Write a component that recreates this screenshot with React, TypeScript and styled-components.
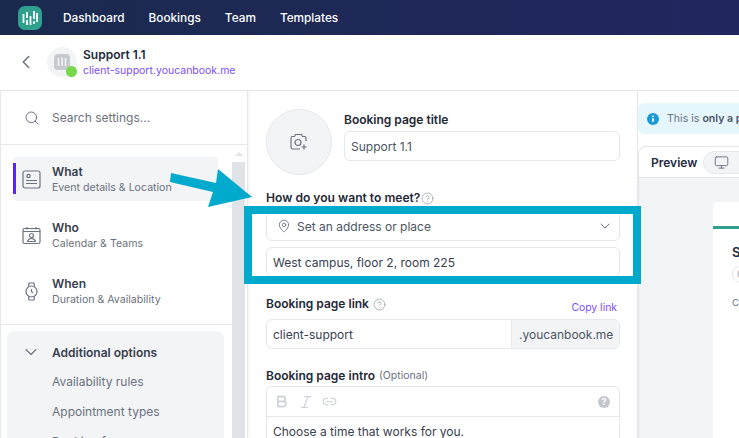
import React from "react";
import styled, { createGlobalStyle } from "styled-components";
import { ChevronDown, ChevronLeft, CircleHelp, Italic, Link2, MapPin, Monitor, Search, Bold } from "lucide-react";

const GlobalStyle = createGlobalStyle`
  html, body { margin: 0; padding: 0; background: #fff; }
  body { font-family: Inter, "Noto Sans", sans-serif; color: #1f2937; }
  * { box-sizing: border-box; }
`;

const Page = styled.div`
  position: relative;
  width: 739px;
  height: 438px;
  overflow: hidden;
  display: flex;
  flex-direction: column;
`;

const Nav = styled.nav`
  height: 35px;
  flex: none;
  display: flex;
  align-items: center;
  padding-left: 18px;
  background: linear-gradient(90deg, #1a2a4e, #22265f);
`;

const NavLinks = styled.div`
  display: flex;
  gap: 24px;
  margin-left: 21px;
`;

const NavLink = styled.a`
  color: #fff;
  font-size: 11.8px;
  font-weight: 500;
`;

const Header = styled.header`
  height: 56px;
  flex: none;
  display: flex;
  align-items: center;
  padding: 0 0 1px 15px;
  border-bottom: 1px solid #e5e7eb;
`;

const BackButton = styled.span`
  display: flex;
  color: #6b7280;
  margin-right: 10px;
`;

const Avatar = styled.div`
  position: relative;
  width: 30px;
  height: 30px;
  border-radius: 50%;
  background: #f3f4f6;
  display: flex;
  align-items: center;
  justify-content: center;
  margin-right: 6px;
`;

const StatusDot = styled.span`
  position: absolute;
  right: 0;
  bottom: 0;
  width: 11px;
  height: 11px;
  border-radius: 50%;
  background: #76d84a;
`;

const HeaderTitle = styled.div`
  font-size: 12px;
  font-weight: 600;
  line-height: 16px;
  margin-top: 1px;
  color: #1f2937;
`;

const HeaderLink = styled.div`
  font-size: 10.5px;
  line-height: 15px;
  color: #7c4dff;
`;

const Body = styled.div`
  flex: 1;
  min-height: 0;
  display: grid;
  grid-template-columns: 248px 390px 1fr;
`;

const Sidebar = styled.aside`
  border-left: 1px solid #e5e7eb;
  border-right: 1px solid #e5e7eb;
  box-shadow: 2px 0 3px rgba(0, 0, 0, 0.04);
  overflow: hidden;
`;

const SearchBar = styled.div`
  height: 54px;
  display: flex;
  align-items: center;
  gap: 12px;
  padding-left: 23px;
  border-bottom: 1px solid #e5e7eb;
  color: #6b7280;
`;

const SearchText = styled.span`
  font-size: 12px;
  color: #6b7280;
`;

const SideScroll = styled.div`
  display: grid;
  grid-template-columns: 231px 13px;
`;

const SideContent = styled.div`
  min-width: 0;
`;

const ScrollTrack = styled.div`
  display: flex;
  flex-direction: column;
  align-items: center;
`;

const ScrollArrow = styled.span`
  width: 0;
  height: 0;
  margin-top: 7px;
  border-left: 4px solid transparent;
  border-right: 4px solid transparent;
  border-bottom: 4px solid #e0e4e9;
`;

const ScrollThumb = styled.div`
  width: 13px;
  height: 300px;
  margin-top: 6px;
  background: #e0e4e9;
`;

const SideNav = styled.div`
  display: flex;
  flex-direction: column;
  gap: 12px;
  padding: 12px 0 11px 12px;
`;

const SideItem = styled.div<{ $active?: boolean }>`
  position: relative;
  width: 205px;
  height: 44px;
  display: flex;
  align-items: center;
  gap: 11px;
  padding-left: 9px;
  border-radius: 4px;
  background: ${(p) => (p.$active ? "#f3f4f6" : "transparent")};
`;

const ActiveBar = styled.span`
  position: absolute;
  left: 0;
  top: 6px;
  bottom: 7px;
  width: 3px;
  background: #5b21f5;
`;

const SideIcon = styled.svg`
  width: 19px;
  height: 19px;
  flex: none;
  fill: none;
  stroke: #6b7280;
  stroke-width: 1.2;
`;

const SideTitle = styled.div`
  font-size: 12px;
  font-weight: 600;
  line-height: 15px;
  color: #374151;
`;

const SideSub = styled.div`
  font-size: 10.6px;
  line-height: 15px;
  margin-top: 1px;
  color: #6b7280;
`;

const Divider = styled.div`
  height: 1px;
  background: #e5e7eb;
`;

const OptionsPanel = styled.div`
  margin: 6px 0 0 6px;
  padding-top: 6px;
  width: 217px;
  height: 130px;
  border-radius: 8px 8px 0 0;
  background: #f3f4f6;
`;

const OptionsHead = styled.div`
  height: 30px;
  display: flex;
  align-items: center;
  gap: 11px;
  padding-left: 14px;
  color: #6b7280;
`;

const OptionsTitle = styled.span`
  font-size: 12px;
  font-weight: 600;
  color: #374151;
`;

const OptionItem = styled.div`
  height: 30px;
  line-height: 30px;
  padding-left: 45px;
  font-size: 12px;
  color: #6b7280;
`;

const Form = styled.main`
  border-right: 1px solid #e5e7eb;
  padding: 18px 17px 0 18px;
  overflow: hidden;
`;

const TitleRow = styled.div`
  display: flex;
  gap: 12px;
`;

const PhotoCircle = styled.div`
  width: 66px;
  height: 66px;
  flex: none;
  border-radius: 50%;
  border: 1px solid #e5e7eb;
  background: #f3f4f6;
  display: flex;
  align-items: center;
  justify-content: center;
`;

const TitleField = styled.div`
  flex: 1;
  padding-top: 1px;
`;

const Label = styled.div`
  display: flex;
  align-items: center;
  gap: 4px;
  font-size: 12px;
  font-weight: 600;
  line-height: 20px;
  color: #1f2937;
`;

const HelpIcon = styled.span`
  display: flex;
  color: #9ca3af;
`;

const Input = styled.div<{ $top?: number; $soft?: boolean }>`
  height: 30px;
  margin-top: ${(p) => p.$top ?? 0}px;
  display: flex;
  align-items: center;
  padding: 0 6px;
  border: 1px solid #e5e7eb;
  border-radius: 6px;
  font-size: 12px;
  color: ${(p) => (p.$soft ? "#4b5563" : "#374151")};
  background: #fff;
`;

const MeetLabel = styled(Label)`
  margin-top: 13px;
  gap: 1px;
  font-size: 12.1px;
`;

const SelectBox = styled(Input)`
  padding: 0 6px 0 10px;
  gap: 6px;
  color: #4b5563;
`;

const SelectText = styled.span`
  flex: 1;
`;

const LinkRow = styled.div`
  display: flex;
  align-items: flex-end;
  justify-content: space-between;
  margin-top: 17px;
  padding-right: 3px;
`;

const CopyLink = styled.span`
  font-size: 10.4px;
  line-height: 14px;
  margin-bottom: -1px;
  color: #7c4dff;
`;

const LinkInput = styled.div`
  height: 30px;
  margin-top: 5px;
  display: flex;
  border: 1px solid #e5e7eb;
  border-radius: 6px;
  overflow: hidden;
  font-size: 12px;
  color: #374151;
`;

const LinkValue = styled.span`
  flex: 1;
  display: flex;
  align-items: center;
  padding-left: 6px;
`;

const LinkSuffix = styled.span`
  display: flex;
  align-items: center;
  padding: 0 7px;
  width: 108px;
  border-left: 1px solid #e5e7eb;
  background: #f3f4f6;
  color: #4b5563;
`;

const IntroLabel = styled(Label)`
  margin-top: 17px;
`;

const OptionalText = styled.span`
  font-size: 10.5px;
  font-weight: 400;
  color: #6b7280;
`;

const Editor = styled.div`
  border: 1px solid #e5e7eb;
  border-radius: 6px 6px 0 0;
`;

const EditorTools = styled.div`
  height: 30px;
  display: flex;
  align-items: center;
  gap: 8.5px;
  padding: 0 9px 0 7px;
  color: #d1d5db;
  border-bottom: 1px solid #e5e7eb;
`;

const ToolHelp = styled.span`
  margin-left: auto;
  width: 12px;
  height: 12px;
  border-radius: 50%;
  background: #c4c8ce;
  color: #fff;
  font-size: 9px;
  font-weight: 700;
  line-height: 12px;
  text-align: center;
`;

const EditorText = styled.div`
  padding: 6px 6px;
  font-size: 12px;
  line-height: 18px;
  color: #374151;
  white-space: nowrap;
`;

const PreviewColumn = styled.section`
  padding-top: 12px;
  min-width: 0;
  overflow: hidden;
  background: #fff;
`;

const InfoBanner = styled.div`
  height: 31px;
  display: flex;
  align-items: center;
  gap: 8px;
  padding-left: 9px;
  border-radius: 6px 0 0 6px;
  background: #e5f6fd;
  font-size: 10.6px;
  color: #6b7280;
  white-space: nowrap;
`;

const InfoIcon = styled.svg`
  width: 12px;
  height: 12px;
  flex: none;
`;

const InfoStrong = styled.strong`
  font-weight: 600;
  color: #4b5563;
`;

const PreviewPanel = styled.div`
  margin-top: 12px;
  height: 300px;
  border: 1px solid #e5e7eb;
  border-right: 0;
  border-radius: 8px 0 0 0;
  overflow: hidden;
  background: #f3f4f6;
`;

const PreviewHead = styled.div`
  height: 31px;
  display: flex;
  align-items: center;
  gap: 6px;
  padding-left: 12px;
  background: #fff;
  border-bottom: 1px solid #e5e7eb;
`;

const PreviewTitle = styled.span`
  font-size: 12px;
  font-weight: 600;
  color: #1f2a44;
`;

const DeviceToggle = styled.div`
  flex: none;
  width: 60px;
  height: 23px;
  display: flex;
  align-items: center;
  padding-left: 10px;
  border: 1px solid #e5e7eb;
  border-radius: 12px 0 0 12px;
  background: #f3f4f6;
  color: #6b7280;
`;

const PreviewCard = styled.div`
  margin: 24px 0 0 74px;
  height: 240px;
  padding-top: 24px;
  border-radius: 4px 0 0 0;
  background: #fff;
`;

const CardStripe = styled.div`
  height: 3px;
  background: #2f9e8f;
`;

const CardTitle = styled.div`
  margin: 15px 0 0 19px;
  font-size: 13px;
  font-weight: 600;
  line-height: 16px;
  white-space: nowrap;
  color: #1f2937;
`;

const CardChip = styled.div`
  width: 40px;
  height: 18px;
  margin: 5px 0 0 19px;
  border: 1px solid #e5e7eb;
  border-radius: 9px 0 0 9px;
  font-size: 10px;
  line-height: 16px;
  padding-left: 4px;
  color: #9ca3af;
`;

const CardNote = styled.div`
  margin: 14px 0 0 19px;
  font-size: 9.5px;
  color: #6b7280;
  white-space: nowrap;
`;

const HighlightBox = styled.div`
  position: absolute;
  left: 244px;
  top: 206px;
  width: 397px;
  height: 78px;
  border: 8px solid #00aacc;
  pointer-events: none;
`;

const ArrowMark = styled.svg`
  position: absolute;
  left: 165px;
  top: 165px;
  width: 92px;
  height: 46px;
  fill: #00aacc;
  pointer-events: none;
`;

const Logo = () => (
  <svg width="24" height="24" viewBox="0 0 24 24">
    <rect width="24" height="24" rx="7" fill="#2fa08e" />
    <g stroke="#fff" strokeWidth="1.8">
      <path d="M5.5 8v9M9 6v6M9 14v5M12.500 10v9M16 5v8M16 15v3M19 7v9" />
    </g>
  </svg>
);

export default function App() {
  return (
    <Page>
      <GlobalStyle />
      <Nav>
        <Logo />
        <NavLinks>
          <NavLink>Dashboard</NavLink>
          <NavLink>Bookings</NavLink>
          <NavLink>Team</NavLink>
          <NavLink>Templates</NavLink>
        </NavLinks>
      </Nav>
      <Header>
        <BackButton>
          <ChevronLeft size={22} strokeWidth={1.6} />
        </BackButton>
        <Avatar>
          <svg width="16" height="16" viewBox="0 0 16 16">
            <rect width="16" height="16" rx="4" fill="#c6cacf" />
            <path d="M4.5 4v8M8 3.5v8.5M11.5 4v8" stroke="#f3f4f6" strokeWidth="1.5" />
          </svg>
          <StatusDot />
        </Avatar>
        <div>
          <HeaderTitle>Support 1.1</HeaderTitle>
          <HeaderLink>client-support.youcanbook.me</HeaderLink>
        </div>
      </Header>
      <Body>
        <Sidebar>
          <SearchBar>
            <Search size={16} strokeWidth={1.5} />
            <SearchText>Search settings...</SearchText>
          </SearchBar>
          <SideScroll>
            <SideContent>
              <SideNav>
                <SideItem $active>
                  <ActiveBar />
                  <SideIcon viewBox="0 0 19 19">
                    <rect x="1" y="1" width="17" height="17" rx="2" />
                    <circle cx="6.5" cy="6" r="1.6" />
                    <path d="M4 10.5h11M4 13.5h11" />
                  </SideIcon>
                  <div>
                    <SideTitle>What</SideTitle>
                    <SideSub>Event details &amp; Location</SideSub>
                  </div>
                </SideItem>
                <SideItem>
                  <SideIcon viewBox="0 0 19 19">
                    <rect x="1" y="2.5" width="17" height="15" rx="1.5" />
                    <path d="M1 5.5h17M5 1v2.5M14 1v2.5" />
                    <circle cx="9.5" cy="9.500" r="2" />
                    <path d="M5.5 15.5c.5-2 2-3 4-3s3.500 1 4 3z" />
                  </SideIcon>
                  <div>
                    <SideTitle>Who</SideTitle>
                    <SideSub>Calendar &amp; Teams</SideSub>
                  </div>
                </SideItem>
                <SideItem>
                  <SideIcon viewBox="0 0 19 19">
                    <circle cx="9.5" cy="9.5" r="5.5" />
                    <path d="M6.500 4.500L7 1h5l.5 3.500M6.500 14.500L7 18h5l.5-3.500M9.500 7v2.700l1.700 1" />
                  </SideIcon>
                  <div>
                    <SideTitle>When</SideTitle>
                    <SideSub>Duration &amp; Availability</SideSub>
                  </div>
                </SideItem>
              </SideNav>
              <Divider />
              <OptionsPanel>
                <OptionsHead>
                  <ChevronDown size={20} strokeWidth={1.3} />
                  <OptionsTitle>Additional options</OptionsTitle>
                </OptionsHead>
                <OptionItem>Availability rules</OptionItem>
                <OptionItem>Appointment types</OptionItem>
                <OptionItem>Booking form</OptionItem>
              </OptionsPanel>
            </SideContent>
            <ScrollTrack>
              <ScrollArrow />
              <ScrollThumb />
            </ScrollTrack>
          </SideScroll>
        </Sidebar>
        <Form>
          <TitleRow>
            <PhotoCircle>
              <svg width="18" height="18" viewBox="0 0 18 18" fill="none" stroke="#6b7280" strokeWidth="1.2">
                <path d="M16 8V5a1.500 1.500 0 0 0-1.500-1.500H12.500L11.500 1.500H5.500L4.500 3.500H2.500A1.500 1.500 0 0 0 1 5v9.500A1.500 1.500 0 0 0 2.500 16H10" />
                <circle cx="8" cy="9.500" r="3" />
                <path d="M14 11.500v5M11.500 14h5" />
              </svg>
            </PhotoCircle>
            <TitleField>
              <Label>Booking page title</Label>
              <Input $top={1} $soft>
                Support 1.1
              </Input>
            </TitleField>
          </TitleRow>
          <MeetLabel>
            How do you want to meet?
            <HelpIcon>
              <CircleHelp size={13} strokeWidth={1.5} />
            </HelpIcon>
          </MeetLabel>
          <SelectBox $top={3}>
            <MapPin size={14} strokeWidth={1.5} color="#6b7280" />
            <SelectText>Set an address or place</SelectText>
            <ChevronDown size={16} strokeWidth={1.5} color="#6b7280" />
          </SelectBox>
          <Input $top={6}>West campus, floor 2, room 225</Input>
          <LinkRow>
            <Label>
              Booking page link
              <HelpIcon>
                <CircleHelp size={13} strokeWidth={1.5} />
              </HelpIcon>
            </Label>
            <CopyLink>Copy link</CopyLink>
          </LinkRow>
          <LinkInput>
            <LinkValue>client-support</LinkValue>
            <LinkSuffix>.youcanbook.me</LinkSuffix>
          </LinkInput>
          <IntroLabel>
            Booking page intro <OptionalText>(Optional)</OptionalText>
          </IntroLabel>
          <Editor>
            <EditorTools>
              <Bold size={15} strokeWidth={3} />
              <Italic size={16} strokeWidth={2} />
              <Link2 size={15} strokeWidth={2} />
              <ToolHelp>?</ToolHelp>
            </EditorTools>
            <EditorText>Choose a time that works for you.</EditorText>
          </Editor>
        </Form>
        <PreviewColumn>
          <InfoBanner>
            <InfoIcon viewBox="0 0 12 12">
              <circle cx="6" cy="6" r="6" fill="#1b9ad6" />
              <path d="M6 5.200v3.600M6 2.700v1.300" stroke="#fff" strokeWidth="1.700" />
            </InfoIcon>
            <span>
              This is <InfoStrong>only a preview</InfoStrong>
            </span>
          </InfoBanner>
          <PreviewPanel>
            <PreviewHead>
              <PreviewTitle>Preview</PreviewTitle>
              <DeviceToggle>
                <Monitor size={15} strokeWidth={1.5} />
              </DeviceToggle>
            </PreviewHead>
            <PreviewCard>
              <CardStripe />
              <CardTitle>Support 1.1</CardTitle>
              <CardChip>C</CardChip>
              <CardNote>Choose a time</CardNote>
            </PreviewCard>
          </PreviewPanel>
        </PreviewColumn>
      </Body>
      <HighlightBox />
      <ArrowMark viewBox="0 0 92 46">
        <polygon points="6,8 51,18 53,4 87,32 43,42 48,27 5,17" />
      </ArrowMark>
    </Page>
  );
}
